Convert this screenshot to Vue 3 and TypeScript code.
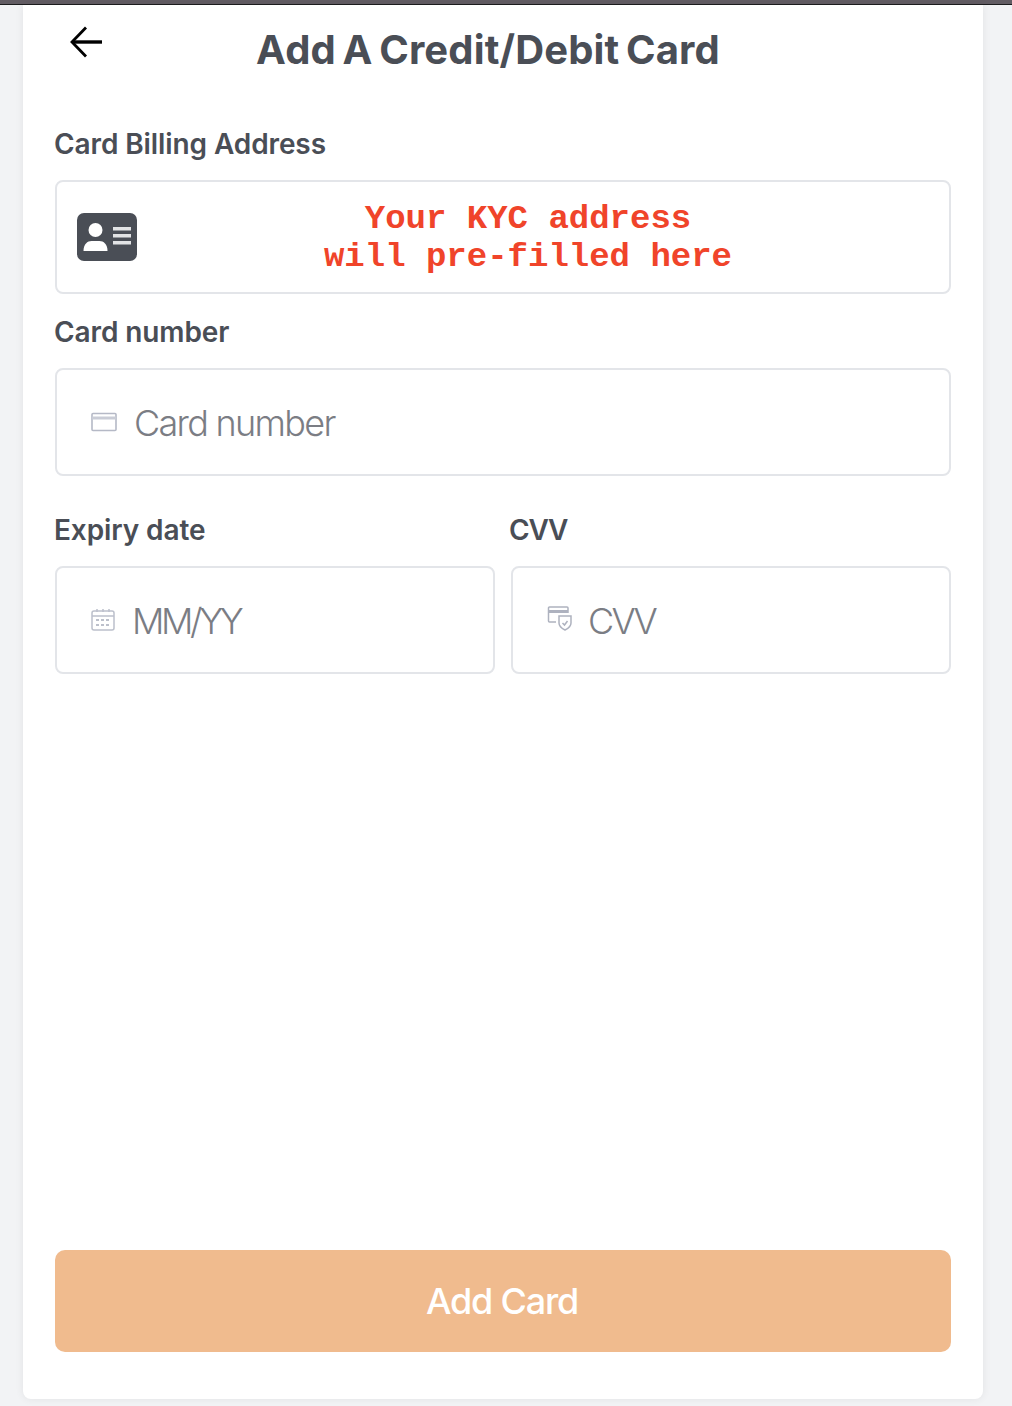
<script setup lang="ts">
const title: string = 'Add A Credit/Debit Card'
</script>

<template>
  <div class="page">
    <div class="topbar"></div>
    <main class="card">
      <header class="head">
        <button class="back" type="button" aria-label="Back">
          <svg width="36" height="36" viewBox="0 0 36 36" fill="none" stroke="#000" stroke-width="3.400">
            <path d="M34 18H5" />
            <path d="M18 3.500 4 18 18 32.500" stroke-width="2.800" />
          </svg>
        </button>
        <h1>{{ title }}</h1>
      </header>

      <label class="label first">Card Billing Address</label>
      <div class="field address">
        <svg class="id" width="60" height="48" viewBox="0 0 60 48">
          <rect width="60" height="48" rx="7" fill="#4a4e56" />
          <circle cx="18.500" cy="17" r="7" fill="#fff" />
          <path d="M6.500 38c0-7 4-10 8-10h8c4 0 8 3 8 10z" fill="#fff" />
          <path d="M36 14h18v3.500H36zM36 21h18v3.500H36zM36 28h18v3.500H36z" fill="#e2e3e5" />
        </svg>
        <p class="kyc">Your KYC address<br />will pre-filled here</p>
      </div>

      <label class="label second">Card number</label>
      <div class="field input">
        <svg class="ic" width="26" height="20" viewBox="0 0 26 20" fill="none" stroke="#b5b9c6" stroke-width="1.600">
          <rect x="1" y="1.500" width="24" height="17" rx="1" />
          <path d="M1 6h24" stroke-width="3" stroke="#c9ccd6" />
        </svg>
        <span class="ph number">Card number</span>
      </div>

      <div class="row">
        <div class="col">
          <label class="label third">Expiry date</label>
          <div class="field input small">
            <svg class="ic cal" width="24" height="24" viewBox="0 0 24 24" fill="none" stroke="#bcc0cb" stroke-width="1.500">
              <rect x="1" y="3" width="22" height="19" rx="2" />
              <path d="M1 8h22M6 1v3M12 1v3M18 1v3" />
              <path d="M5 12h14M5 17h14" stroke-dasharray="3 2" stroke-width="2" />
            </svg>
            <span class="ph date">MM/YY</span>
          </div>
        </div>
        <div class="col">
          <label class="label third cvv">CVV</label>
          <div class="field input small">
            <svg class="ic shield" width="26" height="26" viewBox="0 0 26 26" fill="none" stroke="#aeb2bf" stroke-width="1.500">
              <path d="M9 17H2.500a1 1 0 0 1-1-1V3a1 1 0 0 1 1-1H20a1 1 0 0 1 1 1v5" />
              <path d="M1.500 6.500H21" stroke-width="3" />
              <path d="M12 11h12v7c0 3-3 5.500-6 7-3-1.500-6-4-6-7z" />
              <path d="m15.500 18 2 2 3-4" />
            </svg>
            <span class="ph code">CVV</span>
          </div>
        </div>
      </div>

      <button class="submit" type="button">Add Card</button>
    </main>
  </div>
</template>

<style>
html,
body {
  margin: 0;
  background: #f2f3f5;
}
</style>

<style scoped>
.page {
  width: 1012px;
  height: 1406px;
  overflow: hidden;
  background: #f2f3f5;
  font-family: Inter, 'Noto Sans', sans-serif;
  box-sizing: border-box;
}
.topbar {
  height: 4px;
  background: #625c63;
  border-bottom: 1px solid #1c1c1e;
}
.card {
  width: 960px;
  height: 1394px;
  margin-left: 23px;
  padding: 0 32px;
  box-sizing: border-box;
  background: #fff;
  border-radius: 0 0 8px 8px;
  box-shadow: 0 0 8px rgba(0, 0, 0, 0.07);
  display: flex;
  flex-direction: column;
}
.head {
  height: 90px;
  position: relative;
  display: flex;
  justify-content: center;
}
.back {
  position: absolute;
  left: 13px;
  top: 19px;
  padding: 0;
  border: 0;
  background: none;
  line-height: 0;
}
h1 {
  margin: 22px 0 0;
  height: 46px;
  font-size: 40px;
  line-height: 46px;
  font-weight: 700;
  letter-spacing: 0.15px;
  word-spacing: -3px;
  color: #4a4e56;
  transform: translateX(-15px);
}
.label {
  display: block;
  font-size: 28px;
  line-height: 34px;
  font-weight: 600;
  letter-spacing: -0.1px;
  color: #4a4e56;
  margin-left: -1px;
}
.first {
  margin-top: 32px;
  margin-bottom: 19px;
}
.second {
  margin-top: 21px;
  margin-bottom: 19px;
}
.third {
  margin-top: 37px;
  margin-bottom: 19px;
}
.cvv {
  margin-left: -2px;
  letter-spacing: -1.2px;
}
.field {
  border: 2px solid #e3e5e9;
  border-radius: 8px;
  box-sizing: border-box;
  background: #fff;
  display: flex;
  align-items: center;
}
.address {
  height: 114px;
  padding-left: 20px;
}
.id {
  flex: none;
}
.kyc {
  flex: 1;
  margin: 2px 0 0;
  padding-right: 30px;
  text-align: center;
  font-family: 'Liberation Mono', monospace;
  font-size: 34px;
  line-height: 38px;
  font-weight: 700;
  color: #f0442a;
}
.input {
  height: 108px;
  padding-left: 34px;
}
.ic {
  flex: none;
  margin-right: 17px;
}
.cal {
  margin-right: 17px;
}
.shield {
  margin-right: 15px;
  margin-top: -4px;
}
.ph {
  padding-top: 2px;
  font-size: 36px;
  font-weight: 300;
  color: #7b7d84;
}
.number {
  letter-spacing: -1.7px;
}
.date {
  letter-spacing: -3.4px;
}
.code {
  letter-spacing: -2.8px;
}
.submit {
  margin-top: auto;
  margin-bottom: 47px;
  height: 102px;
  padding: 0 2px 0 0;
  border: 0;
  border-radius: 10px;
  background: #f0bb8e;
  color: #fff;
  font-family: inherit;
  font-size: 36px;
  font-weight: 500;
  letter-spacing: -1.2px;
}
.row {
  display: grid;
  grid-template-columns: 440px 440px;
  gap: 16px;
}
</style>
